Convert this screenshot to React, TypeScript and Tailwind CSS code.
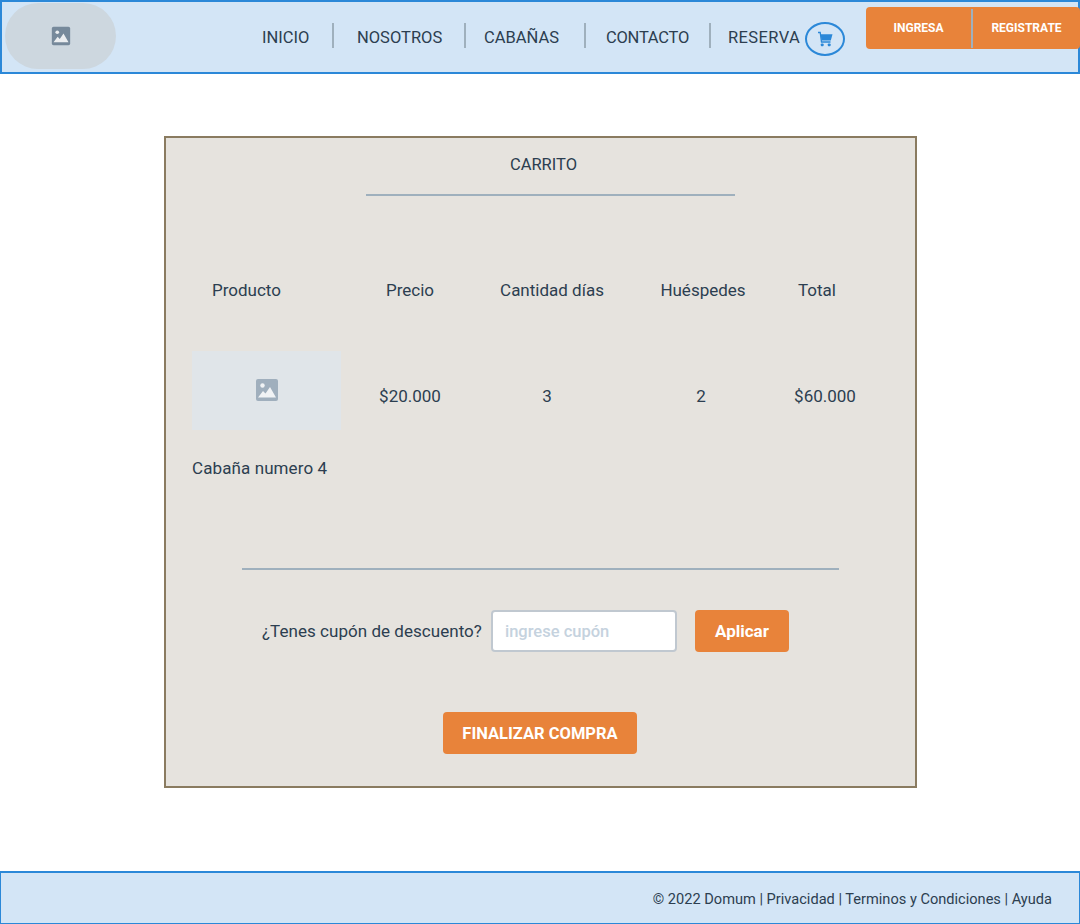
const navItems = [
    { label: "INICIO", className: "w-[72px]" },
    { label: "NOSOTROS", className: "w-[132px] pl-[23px]" },
    { label: "CABAÑAS", className: "w-[120px] pl-[18px]" },
    { label: "CONTACTO", className: "w-[125px] pl-[20px] tracking-[-0.25px]" },
];

function ImageIcon({ className }: { className: string }) {
    return (
        <svg viewBox="0 0 24 24" className={className}>
            <rect x="1" y="1" width="22" height="22" rx="2" fill="currentColor" />
            <circle cx="7.5" cy="7.5" r="2.2" fill="#fff" fillOpacity="0.85" />
            <path d="M3 19.5 8 13l2.5 2.5L15 9l6 10.5z" fill="#fff" fillOpacity="0.85" />
        </svg>
    );
}

function CartIcon() {
    return (
        <svg viewBox="0 0 16 16" className="h-4 w-4">
            <path d="M1 1.5h2.2L4.5 11h9" fill="none" stroke="currentColor" strokeWidth="1.3" />
            <path d="M3.6 3.2H15.5L13.8 9.6H4.5z" fill="currentColor" />
            <rect x="3.8" y="12.4" width="2.8" height="2.8" rx="0.8" fill="currentColor" />
            <rect x="10.8" y="12.4" width="2.8" height="2.8" rx="0.8" fill="currentColor" />
        </svg>
    );
}

function Header() {
    return (
        <header className="flex h-[74px] shrink-0 items-start border-2 border-[#2b88d8] bg-[#d3e5f6]">
            <div className="ml-[3px] mt-px flex h-[66px] w-[111px] items-center justify-center rounded-[33px] bg-[#cdd7df] text-[#76899b]">
                <ImageIcon className="h-5 w-5" />
            </div>
            <nav className="ml-[146px] mt-[21px] flex items-start text-[16.5px]">
                {navItems.map((item) => (
                    <a key={item.label} className={`flex h-[25px] items-center border-r-2 border-[#9fb0bd] pt-[5px] ${item.className}`}>
                        {item.label}
                    </a>
                ))}
                <a className="ml-[17px] flex h-[25px] w-[72px] items-center whitespace-nowrap pt-[5px] tracking-[0.4px]">RESERVA</a>
                <span className="ml-[5px] -mt-px flex h-[34px] w-[40px] items-center justify-center rounded-[50%] border-2 border-[#2b88d8] text-[#2b88d8]">
                    <CartIcon />
                </span>
            </nav>
            <div className="-mr-[2px] ml-[21px] mt-[5px] flex h-[42px] flex-1 items-center rounded bg-[#e8833a] text-[12px] font-bold text-white">
                <a className="flex h-[39px] w-[107px] items-center justify-center border-r-2 border-[#9fb0bd]">INGRESA</a>
                <a className="flex flex-1 items-center justify-center">REGISTRATE</a>
            </div>
        </header>
    );
}

function Cart() {
    return (
        <section className="ml-[164px] mt-[62px] flex h-[652px] w-[753px] flex-col border-2 border-[#8a7b60] bg-[#e6e3de]">
            <h1 className="ml-[6px] mt-[17px] text-center text-[16.5px] leading-5">CARRITO</h1>
            <hr className="ml-[200px] mt-[19px] w-[369px] border-t-2 border-[#9fb0bd]" />

            <div className="ml-[26px] mt-[84px] flex text-center text-[17px] leading-5">
                <div className="w-[138px] pl-5 text-left">Producto</div>
                <div className="w-[160px]">Precio</div>
                <div className="w-[124px]">Cantidad días</div>
                <div className="w-[178px]">Huéspedes</div>
                <div className="w-[50px]">Total</div>
            </div>

            <div className="ml-[26px] mt-[51px] flex items-center text-center text-[17px] leading-5">
                <div className="flex h-[79px] w-[149px] items-center justify-center bg-[#e0e5e9] pb-[2px] text-[#a0afbd]">
                    <ImageIcon className="h-6 w-6" />
                </div>
                <div className="w-[138px] pt-[11px]">$20.000</div>
                <div className="w-[136px] pt-[11px]">3</div>
                <div className="w-[172px] pt-[11px]">2</div>
                <div className="w-[76px] pt-[11px]">$60.000</div>
            </div>
            <p className="ml-[26px] mt-[28px] text-[17px] leading-5 tracking-[0.1px]">Cabaña numero 4</p>

            <hr className="ml-[76px] mt-[90px] w-[597px] border-t-2 border-[#9fb0bd]" />

            <div className="ml-[96px] mt-[40px] flex items-center text-[17px]">
                <span className="pt-[2px] tracking-[0.04px]">¿Tenes cupón de descuento?</span>
                <input
                    placeholder="ingrese cupón"
                    className="ml-[9px] h-[42px] w-[186px] rounded border-2 border-[#c0c8d0] bg-white px-3 text-[16.5px] font-medium placeholder:text-[#c5d2de]"
                />
                <button type="button" className="ml-[18px] h-[42px] w-[94px] rounded bg-[#e8833a] pt-px text-[17px] font-bold text-white">Aplicar</button>
            </div>

            <button type="button" className="ml-[277px] mt-[60px] h-[42px] w-[194px] rounded bg-[#e8833a] pt-[2px] text-[16.5px] font-bold text-white">FINALIZAR COMPRA</button>
        </section>
    );
}

export default function App() {
    return (
        <div className="flex h-[924px] flex-col bg-white font-['Roboto',sans-serif] text-[#2c3e50]">
            <Header />
            <main className="flex-1">
                <Cart />
            </main>
            <footer className="flex h-[53px] shrink-0 items-center justify-end border border-t-2 border-[#2b88d8] bg-[#d3e5f6] pr-[27px] pt-1 text-[14.6px]">
                © 2022 Domum | Privacidad | Terminos y Condiciones | Ayuda
            </footer>
        </div>
    );
}
